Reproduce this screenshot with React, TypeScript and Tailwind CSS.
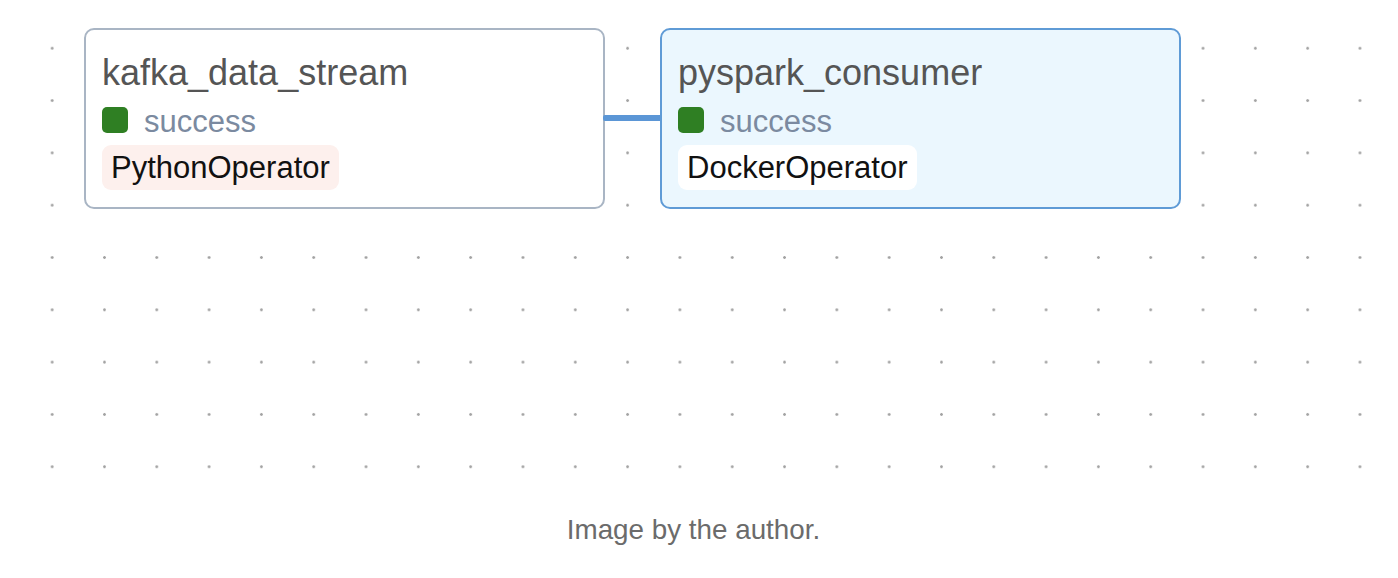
import React from "react";

function Node({
  title,
  op,
  variant,
}: {
  title: string;
  op: string;
  variant: "plain" | "selected";
}) {
  const box =
    variant === "selected"
      ? "border-[#5f9bd6] bg-[#ebf7fe]"
      : "border-[#a9b5c4] bg-white";
  const badge = variant === "selected" ? "bg-white" : "bg-[#fdf0ed]";
  return (
    <div
      className={`w-[521px] h-[181px] shrink-0 rounded-[10px] border-2 ${box} pl-4 pt-[23px] flex flex-col items-start`}
    >
      <div className="text-[36px] leading-[40px] text-[#555555] whitespace-nowrap">{title}</div>
      <div className="mt-[9px] h-[36px] flex items-center gap-4">
        <div className="w-[26px] h-[26px] rounded-[5px] bg-[#2f7f23]" />
        <span className="text-[31px] leading-[36px] text-[#7b8aa0] relative top-[2px]">success</span>
      </div>
      <div
        className={`mt-[7px] h-[45px] rounded-[9px] ${badge} pl-[9px] pr-[9px] text-[31px] leading-[46px] text-[#111111] whitespace-nowrap`}
      >
        {op}
      </div>
    </div>
  );
}

export default function App() {
  return (
    <div
      className="w-[1398px] h-[578px] bg-white overflow-hidden flex flex-col"
      style={{ fontFamily: '"Liberation Sans", Arial, sans-serif' }}
    >
      <div className="h-[493px] ml-[26px] bg-[radial-gradient(circle,#a3a3a3_1.1px,transparent_1.6px)] bg-[length:52.32px_52.32px] bg-[position:0px_22.1px] flex items-start pl-[58px] pt-[28px]">
        <Node title="kafka_data_stream" op="PythonOperator" variant="plain" />
        <div className="mt-[87px] h-[6px] w-[59px] -mx-[2px] shrink-0 bg-[#5b96d6] rounded-[2px]" />
        <Node title="pyspark_consumer" op="DockerOperator" variant="selected" />
      </div>
      <div className="mt-[21px] pr-[11px] text-center text-[27.8px] leading-[32px] text-[#6b6b6b]">
        Image by the author.
      </div>
    </div>
  );
}
